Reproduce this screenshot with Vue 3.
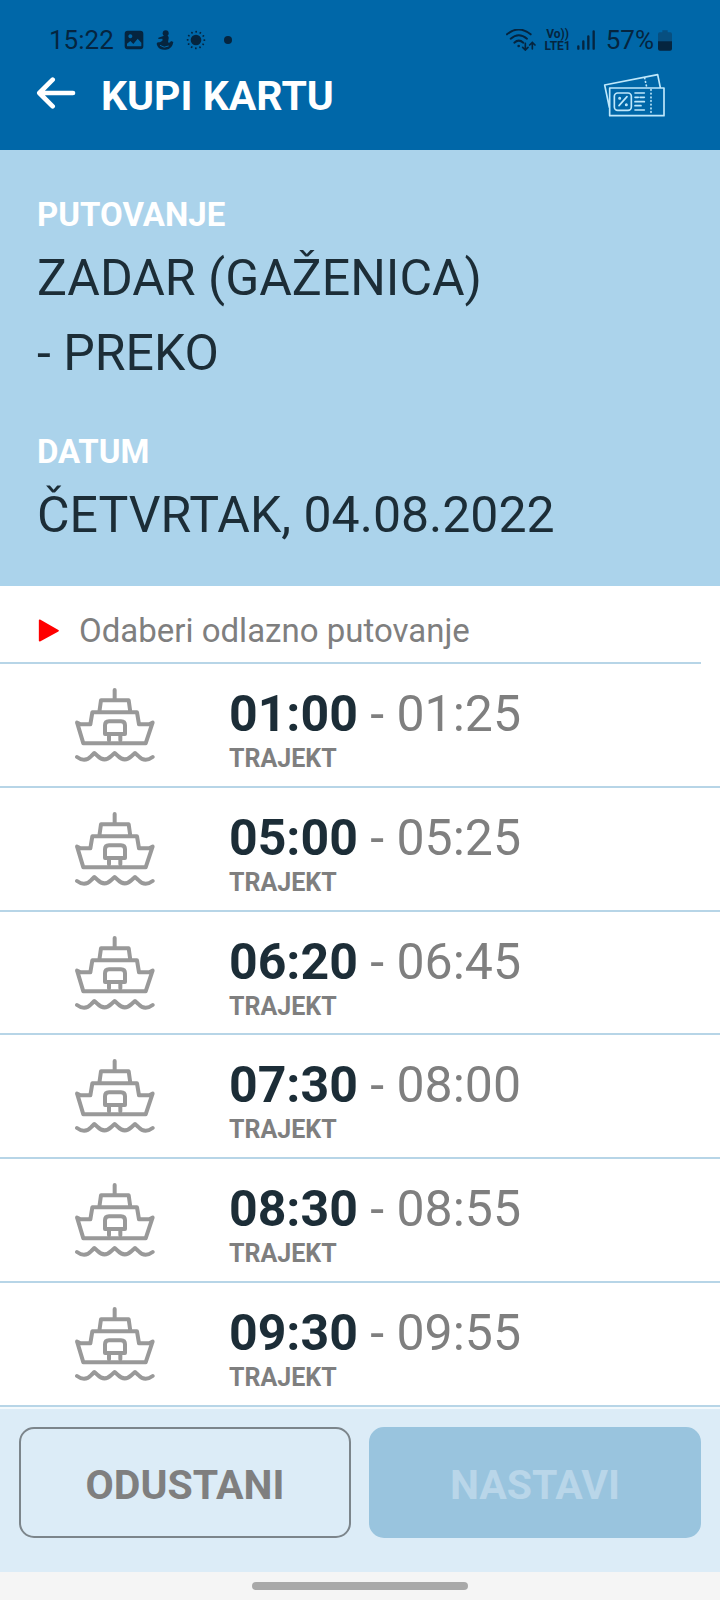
<script setup>
import { ref } from 'vue'

const departures = [
  { from: '01:00', to: '01:25', type: 'TRAJEKT' },
  { from: '05:00', to: '05:25', type: 'TRAJEKT' },
  { from: '06:20', to: '06:45', type: 'TRAJEKT' },
  { from: '07:30', to: '08:00', type: 'TRAJEKT' },
  { from: '08:30', to: '08:55', type: 'TRAJEKT' },
  { from: '09:30', to: '09:55', type: 'TRAJEKT' }
]
const selected = ref(null)
const rays = Array.from({ length: 12 }, (_, i) => i * 30)
</script>

<template>
  <div class="screen">
    <header class="top">
      <div class="status">
        <div class="status-group">
          <span class="clock">15:22</span>
          <svg class="ic-image" viewBox="0 0 60 60" width="20" height="20">
            <path fill-rule="evenodd" d="M11 2h38q9 0 9 9v38q0 9-9 9H11q-9 0-9-9V11q0-9 9-9ZM9 41v8h43V38L41 26 28 42 19 33ZM19 13a6 6 0 1 0 .1 0Z" />
          </svg>
          <svg class="ic-figure" viewBox="0 0 54 60" width="18" height="20">
            <circle cx="29" cy="10" r="9" />
            <path d="M29 16q10 1 9 9l-2 12q5 4 9-4l7 3q-3 21-22 23-17 2-24-8-4-7-4-10 1-5 9-4 5-1 9-6l-1-5-12 1v-4Z" />
            <path class="cut" d="M12 46q12 10 26 2" />
          </svg>
          <svg class="ic-sun" viewBox="-30 -30 60 60" width="20" height="20">
            <circle r="16" />
            <rect v-for="a in rays" :key="a" x="-2" y="-28" width="5" height="6" rx="2" :transform="`rotate(${a})`" />
          </svg>
          <svg class="ic-dot" viewBox="0 0 8 8" width="8" height="8"><circle cx="4" cy="4" r="4" /></svg>
        </div>
        <div class="status-group">
          <svg class="ic-wifi" viewBox="0 0 90 66" width="30" height="22">
            <g class="arcs">
              <path d="M3 16Q38-13 74 16" />
              <path d="M14 29Q38 8 63 29" />
              <path d="M25 41Q38 29 52 41" />
            </g>
            <circle cx="38" cy="51" r="4" />
            <path class="arrows" d="M58 43v20M50 55l8 8 8-8M79 60V40M71 48l8-8 8 8" />
          </svg>
          <span class="lte"><span>Vo))</span><span>LTE1</span></span>
          <svg class="ic-signal" viewBox="0 0 54 60" width="18" height="20">
            <path d="M4 49v7M19 34v22M34 19v37M50 4v52" />
          </svg>
          <span class="percent">57%</span>
          <svg class="ic-battery" viewBox="0 0 42 63" width="14" height="21">
            <path class="shell" d="M13 1h16v6h8q5 0 5 6v22H0V13q0-6 5-6h8Z" />
            <path d="M0 34h42v22q0 6-6 6H6q-6 0-6-6Z" />
          </svg>
        </div>
      </div>
      <div class="bar">
        <button class="icon-btn back" type="button" aria-label="Natrag">
          <svg viewBox="0 0 120 96" width="40" height="32">
            <path d="M111 48H11M50 8 10 48l40 40" />
          </svg>
        </button>
        <h1>KUPI KARTU</h1>
        <button class="icon-btn tickets" type="button" aria-label="Karte">
          <svg viewBox="0 0 186 132" width="62" height="44">
            <path d="M19 103 5 36 164 5l8 39M20 45h163v83H20Z" />
            <rect x="34" y="60" width="51" height="52" rx="10" />
            <path d="m48 98 24-27M96 60h28M96 73h10M111 73h13M96 86h28M96 98h18M96 111h28" />
            <path class="dots" d="M125 15l6 27M144 50v74" />
            <circle cx="50" cy="76" r="2" /><circle cx="70" cy="95" r="2" />
          </svg>
        </button>
      </div>
    </header>

    <section class="trip">
      <h2>PUTOVANJE</h2>
      <p>ZADAR (GAŽENICA)<br>- PREKO</p>
      <h2 class="date-label">DATUM</h2>
      <p>ČETVRTAK, 04.08.2022</p>
    </section>

    <main class="schedule">
      <div class="hint">
        <svg viewBox="0 0 63 69" width="21" height="23">
          <path d="M5 4 60 35 5 65Z" />
        </svg>
        <span>Odaberi odlazno putovanje</span>
      </div>
      <ul>
        <li v-for="d in departures" :key="d.from">
          <button class="row" type="button" @click="selected = d.from">
            <svg class="ferry" viewBox="39 15 252 240" width="84" height="80">
              <path d="M164 30v30M118 96l5-35h83l5 35M51 128l9 4 31 1 6-36h134l6 36 32-1 9-4M52 130l18 60h187l20-60" />
              <path d="M135 162v-26q0-12 12-12h36q12 0 12 12v26ZM147 164v17M181 164v17" />
              <path d="M51 231q24 18 43-3l9-9 10 9q20 20 41 0l10-9 10 9q20 20 41 0l10-9 10 9q19 21 43 3" />
            </svg>
            <span class="info">
              <span class="time"><b>{{ d.from }}</b> - {{ d.to }}</span>
              <span class="type">{{ d.type }}</span>
            </span>
          </button>
        </li>
      </ul>
    </main>

    <footer class="actions">
      <button class="cancel" type="button">ODUSTANI</button>
      <button class="next" type="button" disabled>NASTAVI</button>
    </footer>
    <div class="gesture"><span class="handle"></span></div>
  </div>
</template>

<style>
body {
  margin: 0;
  background: #fff;
}
</style>

<style scoped>
.screen {
  display: flex;
  flex-direction: column;
  min-height: 100vh;
  font-family: Roboto, "Liberation Sans", sans-serif;
  color: #1c2d37;
}
h1, h2, p, ul {
  margin: 0;
  padding: 0;
}
svg {
  display: block;
  flex: none;
}
button {
  font-family: inherit;
  cursor: pointer;
}
.top {
  background: #0067a8;
}
.status {
  display: flex;
  justify-content: space-between;
  height: 40px;
  padding: 20px 48px 0 49px;
  color: #05253f;
  fill: #05253f;
}
.status-group {
  display: flex;
  align-items: center;
}
.clock, .percent {
  font-size: 26px;
  line-height: 40px;
}
.ic-image {
  margin-left: 10px;
}
.ic-figure {
  margin-left: 12px;
}
.ic-sun {
  margin-left: 12px;
}
.ic-dot {
  margin-left: 18px;
}
.cut {
  fill: none;
  stroke: #0067a8;
  stroke-width: 3;
}
.arcs, .arrows {
  fill: none;
  stroke: #05253f;
  stroke-width: 6;
  stroke-linecap: round;
}
.arrows {
  stroke-width: 5;
}
.lte {
  display: flex;
  flex-direction: column;
  align-items: center;
  margin: 0 6px 0 8px;
  font-size: 12px;
  font-weight: 700;
  line-height: 12px;
}
.ic-signal {
  fill: none;
  stroke: #05253f;
  stroke-width: 7;
  stroke-linecap: round;
}
.percent {
  margin: 0 4px 0 11px;
}
.shell {
  fill: #074f80;
}
.bar {
  display: flex;
  align-items: center;
  height: 72px;
  padding: 0 55px 18px 36px;
}
.icon-btn {
  padding: 0;
  border: 0;
  background: none;
}
.icon-btn svg {
  fill: none;
  stroke-linecap: round;
  stroke-linejoin: round;
}
.back {
  padding-bottom: 6px;
}
.back svg {
  stroke: #fff;
  stroke-width: 14;
}
.tickets {
  margin-left: auto;
  padding-bottom: 2px;
}
.tickets svg {
  stroke: #bfe8fb;
  stroke-width: 5;
}
.tickets .dots {
  stroke-dasharray: 2 9;
}
h1 {
  margin-left: 25px;
  font-size: 41px;
  line-height: 48px;
  color: #fff;
}
.trip {
  padding: 45px 37px 33px;
  background: #abd3eb;
}
h2 {
  margin-bottom: 6px;
  font-size: 33px;
  line-height: 40px;
  color: #fff;
}
.date-label {
  margin-top: 41px;
}
.trip p {
  font-size: 50px;
  line-height: 75px;
}
.schedule {
  display: flex;
  flex-direction: column;
  flex: 1;
}
.hint {
  display: flex;
  align-items: center;
  gap: 20px;
  margin-right: 19px;
  padding: 24px 0 11px 38px;
  border-bottom: 2px solid #b7d5e7;
  font-size: 33px;
  line-height: 41px;
  color: #7f7f7f;
}
.hint svg {
  fill: #f00;
  stroke: #f00;
  stroke-width: 5;
  stroke-linejoin: round;
}
ul {
  display: flex;
  flex-direction: column;
  flex: 1;
  list-style: none;
}
li {
  display: flex;
  flex: 1;
  border-bottom: 2px solid #b7d5e7;
}
.row {
  display: flex;
  align-items: center;
  gap: 72px;
  width: 100%;
  padding: 0 19px 0 73px;
  border: 0;
  background: #fff;
  text-align: left;
  color: #7f7f7f;
}
.ferry {
  fill: none;
  stroke: #999;
  stroke-width: 12;
  stroke-linecap: round;
  stroke-linejoin: round;
}
.info {
  display: flex;
  flex-direction: column;
  gap: 2px;
  padding-top: 10px;
}
.time {
  font-size: 50px;
  line-height: 56px;
}
.time b {
  color: #1c2d37;
}
.type {
  font-size: 25px;
  font-weight: 700;
  line-height: 30px;
}
.actions {
  display: flex;
  gap: 18px;
  padding: 18px 19px 34px;
  border-top: 2px solid #f3f9fc;
  background: #dcecf7;
}
.actions button {
  flex: 1;
  height: 111px;
  padding: 4px 0 0;
  border: 2px solid #7c858b;
  border-radius: 15px;
  background: none;
  font-size: 41px;
  font-weight: 700;
  line-height: 50px;
  color: #7f7f7f;
}
.actions .next {
  border-color: #99c4de;
  background: #99c4de;
  color: #b9d6e9;
}
.gesture {
  display: flex;
  justify-content: center;
  align-items: center;
  height: 28px;
  background: #f5f5f5;
}
.handle {
  width: 30%;
  height: 8px;
  border-radius: 4px;
  background: #a9a9a9;
}
</style>
